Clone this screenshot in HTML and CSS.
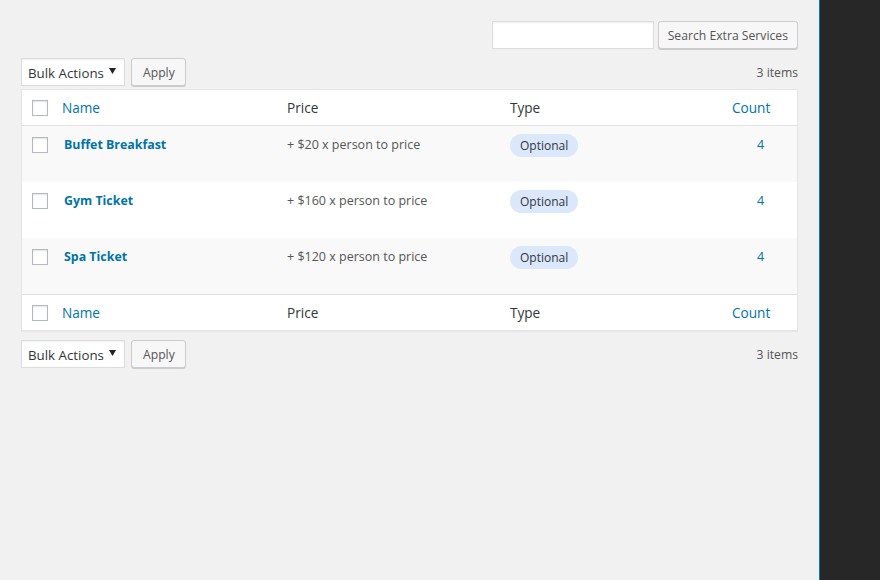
FILE: index.html
```html
<!DOCTYPE html>
<html>
<head>
<meta charset="utf-8">
<link rel="stylesheet" href="styles.css">
</head>
<body>
<div class="layout">
  <main class="main">
    <div class="search-box">
      <input class="search-input" type="text">
      <button class="button">Search Extra Services</button>
    </div>

    <div class="tablenav">
      <div class="actions">
        <div class="select"><span>Bulk Actions</span><svg class="caret" width="7" height="6" viewBox="0 0 7 6"><path d="M0 0H7L3.5 6Z" fill="#222"/></svg></div>
        <button class="button apply">Apply</button>
      </div>
      <span class="count-text">3 items</span>
    </div>

    <table class="list">
      <colgroup>
        <col class="c-check"><col class="c-name"><col class="c-price"><col class="c-type"><col>
      </colgroup>
      <thead>
        <tr>
          <th class="check"><span class="cb"></span></th>
          <th class="link">Name</th>
          <th>Price</th>
          <th>Type</th>
          <th class="link">Count</th>
        </tr>
      </thead>
      <tbody>
        <tr class="alt">
          <td class="check"><span class="cb"></span></td>
          <td class="name">Buffet Breakfast</td>
          <td class="price">+ $20 x person to price</td>
          <td class="type"><span class="badge">Optional</span></td>
          <td class="num">4</td>
        </tr>
        <tr>
          <td class="check"><span class="cb"></span></td>
          <td class="name">Gym Ticket</td>
          <td class="price">+ $160 x person to price</td>
          <td class="type"><span class="badge">Optional</span></td>
          <td class="num">4</td>
        </tr>
        <tr class="alt">
          <td class="check"><span class="cb"></span></td>
          <td class="name">Spa Ticket</td>
          <td class="price">+ $120 x person to price</td>
          <td class="type"><span class="badge">Optional</span></td>
          <td class="num">4</td>
        </tr>
      </tbody>
      <tfoot>
        <tr>
          <th class="check"><span class="cb"></span></th>
          <th class="link">Name</th>
          <th>Price</th>
          <th>Type</th>
          <th class="link">Count</th>
        </tr>
      </tfoot>
    </table>

    <div class="tablenav bottom">
      <div class="actions">
        <div class="select"><span>Bulk Actions</span><svg class="caret" width="7" height="6" viewBox="0 0 7 6"><path d="M0 0H7L3.5 6Z" fill="#222"/></svg></div>
        <button class="button apply">Apply</button>
      </div>
      <span class="count-text">3 items</span>
    </div>
  </main>
  <aside class="side"></aside>
</div>
</body>
</html>
```
FILE: styles.css
```css
* { box-sizing: border-box; }
html, body { margin: 0; height: 100%; }
body {
  background: #f1f1f1;
  font-family: "Open Sans", "Noto Sans", sans-serif;
  font-size: 13px;
  color: #444;
}
.layout { display: flex; height: 580px; }
.main {
  width: 819px;
  padding: 21px 21px 0 21px;
}
.side {
  flex: 1;
  background: #272727;
  border-left: 1px solid #0a78c8;
}
.search-box {
  display: flex;
  justify-content: flex-end;
  gap: 4px;
  height: 28px;
}
.search-input {
  width: 162px;
  height: 28px;
  border: 1px solid #ddd;
  background: #fff;
  box-shadow: inset 0 1px 2px rgba(0,0,0,.07);
  margin: 0;
}
.button {
  height: 28px;
  margin: 0;
  padding: 0 9px;
  font-family: inherit;
  font-size: 12.2px;
  color: #555;
  background: #f7f7f7;
  border: 1px solid #ccc;
  border-radius: 3px;
  box-shadow: 0 1px 0 #ccc;
  line-height: 27px;
}
.button.apply { padding: 0 10px 0 11px; }
.tablenav {
  margin-top: 9px;
  height: 28px;
  display: flex;
  justify-content: space-between;
  align-items: center;
}
.tablenav.bottom { margin-top: 9px; }
.actions { display: flex; gap: 6px; align-items: flex-start; }
.select {
  height: 28px;
  width: 104px;
  display: flex;
  align-items: center;
  justify-content: space-between;
  padding: 1px 8px 0 6px;
  background: #fff;
  border: 1px solid #ddd;
  box-shadow: inset 0 1px 2px rgba(0,0,0,.07);
  font-size: 13.3px;
  color: #32373c;
}
.caret { margin-top: -4px; }
.count-text { color: #555; font-size: 12.2px; }
.list {
  margin-top: 3px;
  width: 100%;
  border-collapse: separate;
  border-spacing: 0;
  table-layout: fixed;
  background: #fff;
  border: 1px solid #e5e5e5;
  box-shadow: 0 1px 1px rgba(0,0,0,.04);
}
.c-check { width: 30px; }
.c-name { width: 225px; }
.c-price { width: 223px; }
.c-type { width: 222px; }
th {
  text-align: left;
  font-weight: 400;
  font-size: 13.6px;
  color: #32373c;
  line-height: 19px;
  padding: 8px 10px;
}
thead th { border-bottom: 1px solid #e1e1e1; }
tfoot th { border-top: 1px solid #e1e1e1; }
th.link { color: #0073aa; }
th.check, td.check { padding: 0 0 0 10px; vertical-align: top; }
th.check .cb { margin-top: 10px; }
td.check .cb { margin-top: 11px; }
.cb {
  display: block;
  width: 16px;
  height: 16px;
  border: 1px solid #b4b9be;
  background: #fff;
  box-shadow: inset 0 1px 2px rgba(0,0,0,.1);
}
tbody tr { height: 56px; }
tbody tr.alt { background: #f9f9f9; }
td {
  vertical-align: top;
  padding: 9px 10px 8px;
  line-height: 20px;
}
td.type { padding-top: 8px; }
td.name { font-weight: 700; color: #0073aa; padding-left: 12px; font-size: 12.4px; }
td.price { color: #555; font-size: 12.5px; }
td.num { color: #0073aa; padding-left: 35px; font-size: 12.5px; }
.badge {
  display: inline-block;
  height: 23px;
  line-height: 24px;
  padding: 0 10px;
  border-radius: 12px;
  background: #dbe8fb;
  color: #32373c;
  font-size: 12px;
}
```
